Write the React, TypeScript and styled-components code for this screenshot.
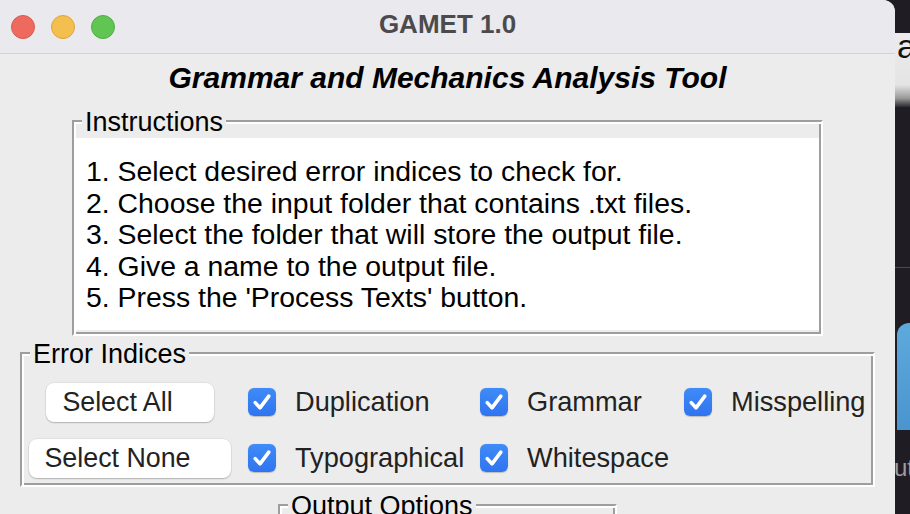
import React from "react";
import styled, { createGlobalStyle } from "styled-components";

const Global = createGlobalStyle`
  html, body { margin: 0; padding: 0; background: #1e1c22; }
  body { width: 910px; height: 514px; overflow: hidden; font-family: "Liberation Sans", Arial, Helvetica, sans-serif; }
  #root { width: 910px; height: 514px; }
`;

const Page = styled.div`
  display: flex;
  width: 910px;
  height: 514px;
  overflow: hidden;
`;

const Window = styled.div`
  width: 895px;
  height: 514px;
  flex-shrink: 0;
  display: flex;
  flex-direction: column;
  background: #ececec;
  border-top-right-radius: 12px;
  overflow: hidden;
`;

const TitleBar = styled.div`
  height: 53px;
  flex-shrink: 0;
  border-bottom: 1px solid #d2d2d4;
  background: #eae9ed;
  display: grid;
  grid-template-columns: 1fr auto 1fr;
  align-items: center;
`;

const Lights = styled.div`
  display: flex;
  gap: 16px;
  padding-left: 11px;
`;

const Light = styled.span<{ $c: string; $b: string }>`
  width: 24px;
  height: 24px;
  border-radius: 50%;
  box-sizing: border-box;
  background: ${(p) => p.$c};
  border: 1px solid ${(p) => p.$b};
`;

const Title = styled.div`
  font-size: 26px;
  font-weight: bold;
  color: #4b4b4d;
  margin-bottom: 4px;
`;

const Body = styled.div`
  display: flex;
  flex-direction: column;
  align-items: center;
`;

const Heading = styled.h1`
  margin: 7px 0 0 0;
  font-size: 30px;
  line-height: 34px;
  font-weight: bold;
  font-style: italic;
  color: #000;
`;

const Groove = styled.div<{ $w: number; $h: number; $mt: number }>`
  position: relative;
  box-sizing: border-box;
  width: ${(p) => p.$w}px;
  height: ${(p) => p.$h}px;
  margin-top: ${(p) => p.$mt}px;
  flex-shrink: 0;
  border-style: solid;
  border-width: 2px;
  border-color: #9e9e9e #ffffff #ffffff #9e9e9e;
  box-shadow: inset 2px 2px 0 #ffffff, inset -2px -2px 0 #9e9e9e;
`;

const Legend = styled.span`
  position: absolute;
  top: -13px;
  left: 8px;
  padding: 0 3px;
  background: #ececec;
  font-size: 27px;
  line-height: 27px;
  color: #000;
  white-space: nowrap;
`;

const InstrFrame = styled(Groove)`
  padding: 16px 2px 2px 2px;
`;

const TextBox = styled.div`
  background: #ffffff;
  height: 192px;
  box-sizing: border-box;
  padding: 18px 11px 0 10px;
`;

const Line = styled.div`
  font-size: 28.4px;
  line-height: 31.5px;
  color: #000;
  white-space: nowrap;
`;

const ErrFrame = styled(Groove)`
  padding: 28px 0 0 6px;
`;

const Grid = styled.div`
  display: grid;
  grid-template-columns: 220px 232px 204px auto;
  grid-template-rows: 40px 40px;
  row-gap: 16px;
  align-items: center;
`;

const ButtonCell = styled.div`
  width: 204px;
  display: flex;
  justify-content: center;
  align-items: center;
`;

const Button = styled.button`
  height: 39px;
  padding: 0 41px 0 16px;
  background: #ffffff;
  border: none;
  border-radius: 8px;
  box-shadow: 0 1px 1.5px rgba(0, 0, 0, 0.22), 0 0 0 0.5px rgba(0, 0, 0, 0.08);
  font-family: "Liberation Sans", Arial, sans-serif;
  font-size: 26.8px;
  color: #222;
  white-space: nowrap;
  cursor: default;
`;

const Check = styled.label`
  display: flex;
  align-items: center;
  gap: 19px;
  font-size: 27.2px;
  color: #222;
  white-space: nowrap;
`;

const Box = styled.span`
  width: 28px;
  height: 28px;
  flex-shrink: 0;
  border-radius: 6px;
  background: linear-gradient(#3f8bf8, #2f74ef);
  box-shadow: 0 0.5px 1px rgba(0, 0, 0, 0.2);
  display: flex;
  align-items: center;
  justify-content: center;
`;

const OutFrame = styled(Groove)``;

const Desktop = styled.div`
  flex: 1;
  display: flex;
  flex-direction: column;
  background: #1f1d23;
  overflow: hidden;
`;

const DeskGap = styled.div<{ $h: number }>`
  height: ${(p) => p.$h}px;
  flex-shrink: 0;
`;

const DeskLight = styled.div`
  height: 74px;
  flex-shrink: 0;
  background: linear-gradient(#ececec 0%, #e4e4e4 70%, #9a9a9a 88%, #2a2a2e 100%);
  font-size: 34px;
  line-height: 26px;
  padding-left: 2px;
  color: #111;
  overflow: hidden;
`;

const DeskRule = styled.div`
  height: 1px;
  flex-shrink: 0;
  background: #4a4950;
`;

const DeskBlue = styled.div`
  height: 107px;
  flex-shrink: 0;
  margin-left: 2px;
  border-top-left-radius: 12px;
  background: linear-gradient(#5ea9dc, #4a95cf);
`;

const DeskText = styled.div`
  font-size: 24px;
  line-height: 24px;
  color: #9c9ca0;
  white-space: nowrap;
  margin-left: -1px;
`;

const CheckMark = () => (
  <svg width="28" height="28" viewBox="0 0 28 28">
    <path
      d="M7.2 14.6 L12 19.8 L20.8 8.2"
      fill="none"
      stroke="#fff"
      strokeWidth="3.6"
      strokeLinecap="round"
      strokeLinejoin="round"
    />
  </svg>
);

const CheckItem = ({ label }: { label: string }) => (
  <Check>
    <Box>
      <CheckMark />
    </Box>
    {label}
  </Check>
);

const instructions = [
  "1. Select desired error indices to check for.",
  "2. Choose the input folder that contains .txt files.",
  "3. Select the folder that will store the output file.",
  "4. Give a name to the output file.",
  "5. Press the 'Process Texts' button.",
];

export default function App() {
  return (
    <>
      <Global />
      <Page>
        <Window>
          <TitleBar>
            <Lights>
              <Light $c="#ee6a5f" $b="#d65a50" />
              <Light $c="#f5bf4f" $b="#dba63d" />
              <Light $c="#61c554" $b="#50ad44" />
            </Lights>
            <Title>GAMET 1.0</Title>
            <div />
          </TitleBar>
          <Body>
            <Heading>Grammar and Mechanics Analysis Tool</Heading>
            <InstrFrame $w={751} $h={216} $mt={25}>
              <Legend>Instructions</Legend>
              <TextBox>
                {instructions.map((t) => (
                  <Line key={t}>{t}</Line>
                ))}
              </TextBox>
            </InstrFrame>
            <ErrFrame $w={855} $h={135} $mt={16}>
              <Legend>Error Indices</Legend>
              <Grid>
                <ButtonCell>
                  <Button>Select All</Button>
                </ButtonCell>
                <CheckItem label="Duplication" />
                <CheckItem label="Grammar" />
                <CheckItem label="Misspelling" />
                <ButtonCell>
                  <Button>Select None</Button>
                </ButtonCell>
                <CheckItem label="Typographical" />
                <CheckItem label="Whitespace" />
              </Grid>
            </ErrFrame>
            <OutFrame $w={339} $h={120} $mt={17}>
              <Legend>Output Options</Legend>
            </OutFrame>
          </Body>
        </Window>
        <Desktop>
          <DeskGap $h={33} />
          <DeskLight>a</DeskLight>
          <DeskGap $h={160} />
          <DeskRule />
          <DeskGap $h={55} />
          <DeskBlue />
          <DeskGap $h={26} />
          <DeskText>ut</DeskText>
        </Desktop>
      </Page>
    </>
  );
}
